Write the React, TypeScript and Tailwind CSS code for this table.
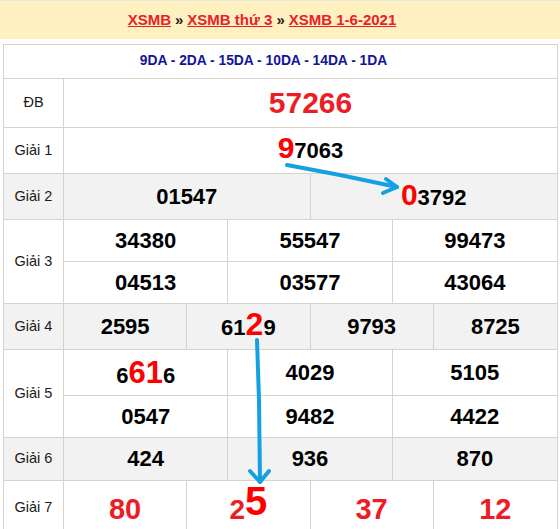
import React from "react";

const B = "border-[#d8d2ca]";

function Label({ children, gray }: { children: React.ReactNode; gray?: boolean }) {
  return (
    <div
      className={`w-[60px] shrink-0 border-r border-[#d8d2ca] flex items-center justify-center text-[14.5px] text-[#1a1a1a] ${
        gray ? "bg-[#f2f2f2]" : ""
      }`}
    >
      {children}
    </div>
  );
}

function Num({
  children,
  className = "",
  size = "text-[22px]",
  color = "text-black",
}: {
  children: React.ReactNode;
  className?: string;
  size?: string;
  color?: string;
}) {
  return (
    <div className={`flex items-center justify-center font-bold leading-none ${size} ${color} ${className}`}>
      <span>{children}</span>
    </div>
  );
}

const R = "text-[#ff0000]";
const RED = "text-[#ee1c25]";

export default function App() {
  return (
    <div className="relative w-[560px] h-[529px] overflow-hidden bg-white font-['Liberation_Sans',Arial,sans-serif]">
      <div className="h-px bg-[#e5e5e5]" />
      <div className="h-[38px] bg-[#fff0bf] flex items-center justify-center pr-[36px] text-[15px] font-bold gap-[4px]">
        <span className="text-[#e8202a] underline">XSMB</span>
        <span className="text-[#222]">»</span>
        <span className="text-[#e8202a] underline">XSMB thứ 3</span>
        <span className="text-[#222]">»</span>
        <span className="text-[#e8202a] underline">XSMB 1-6-2021</span>
      </div>

      <div className={`mt-[5px] ml-[3px] w-[555px] border ${B} flex flex-col`}>
        {/* Row 0 */}
        <div className="h-[33px] flex items-center justify-center pr-[34px] text-[13.8px] font-bold text-[#14149a]">
          9DA - 2DA - 15DA - 10DA - 14DA - 1DA
        </div>

        {/* ĐB */}
        <div className={`h-[49px] flex border-t ${B}`}>
          <Label>ĐB</Label>
          <Num className="flex-1" size="text-[30px]" color={RED}>
            57266
          </Num>
        </div>

        {/* Giải 1 */}
        <div className={`h-[46px] flex border-t ${B}`}>
          <Label>Giải 1</Label>
          <Num className="flex-1 pb-[6px]">
            <span className={`text-[30px] ${R}`}>9</span>7063
          </Num>
        </div>

        {/* Giải 2 */}
        <div className={`h-[46px] flex border-t ${B} bg-[#f2f2f2]`}>
          <Label gray>Giải 2</Label>
          <div className="flex-1 grid grid-cols-2">
            <Num className={`border-r ${B}`}>01547</Num>
            <Num className="pb-[4px]">
              <span className={`text-[30px] ${R}`}>0</span>3792
            </Num>
          </div>
        </div>

        {/* Giải 3 */}
        <div className={`flex border-t ${B}`}>
          <Label>Giải 3</Label>
          <div className="flex-1 grid grid-cols-3">
            <Num className={`h-[42px] border-r border-b ${B}`}>34380</Num>
            <Num className={`h-[42px] border-r border-b ${B}`}>55547</Num>
            <Num className={`h-[42px] border-b ${B}`}>99473</Num>
            <Num className={`h-[41px] border-r ${B}`}>04513</Num>
            <Num className={`h-[41px] border-r ${B}`}>03577</Num>
            <Num className="h-[41px]">43064</Num>
          </div>
        </div>

        {/* Giải 4 */}
        <div className={`h-[46px] flex border-t ${B} bg-[#f2f2f2]`}>
          <Label gray>Giải 4</Label>
          <div className="flex-1 grid grid-cols-4">
            <Num className={`border-r ${B}`}>2595</Num>
            <Num className={`border-r ${B} pb-[5px]`}>
              61<span className={`text-[32px] ${R}`}>2</span>9
            </Num>
            <Num className={`border-r ${B}`}>9793</Num>
            <Num>8725</Num>
          </div>
        </div>

        {/* Giải 5 */}
        <div className={`flex border-t ${B}`}>
          <Label>Giải 5</Label>
          <div className="flex-1 grid grid-cols-3">
            <Num className={`h-[46px] border-r border-b ${B}`}>
              6<span className={`text-[31px] ${R}`}>61</span>6
            </Num>
            <Num className={`h-[46px] border-r border-b ${B}`}>4029</Num>
            <Num className={`h-[46px] border-b ${B}`}>5105</Num>
            <Num className={`h-[41px] border-r ${B}`}>0547</Num>
            <Num className={`h-[41px] border-r ${B}`}>9482</Num>
            <Num className="h-[41px]">4422</Num>
          </div>
        </div>

        {/* Giải 6 */}
        <div className={`h-[43px] flex border-t ${B} bg-[#f2f2f2]`}>
          <Label gray>Giải 6</Label>
          <div className="flex-1 grid grid-cols-3">
            <Num className={`border-r ${B}`}>424</Num>
            <Num className={`border-r ${B}`}>936</Num>
            <Num>870</Num>
          </div>
        </div>

        {/* Giải 7 */}
        <div className={`h-[54px] shrink-0 flex border-t ${B}`}>
          <Label>Giải 7</Label>
          <div className="flex-1 grid grid-cols-4">
            <Num className={`border-r ${B} pt-[3px]`} size="text-[29px]" color={RED}>
              80
            </Num>
            <Num className={`border-r ${B} pb-[10px]`} size="text-[28px]" color={RED}>
              2<span className={`text-[40px] align-[4px] ${R}`}>5</span>
            </Num>
            <Num className={`border-r ${B} pt-[3px]`} size="text-[29px]" color={RED}>
              37
            </Num>
            <Num className="pt-[3px]" size="text-[29px]" color={RED}>
              12
            </Num>
          </div>
        </div>
      </div>

      <svg
        className="absolute inset-0 pointer-events-none"
        width="560"
        height="529"
        viewBox="0 0 560 529"
      >
        <g stroke="#14a1e3" strokeWidth="4" strokeLinecap="round" strokeLinejoin="round" fill="none">
          <path d="M287 165 L340 175 L397 187" />
          <path d="M386 179 L397 187 L383 193" />
          <path d="M257 340 L259 400 L260 482" />
          <path d="M250 471 L260 482 L269 471" />
        </g>
      </svg>
    </div>
  );
}
